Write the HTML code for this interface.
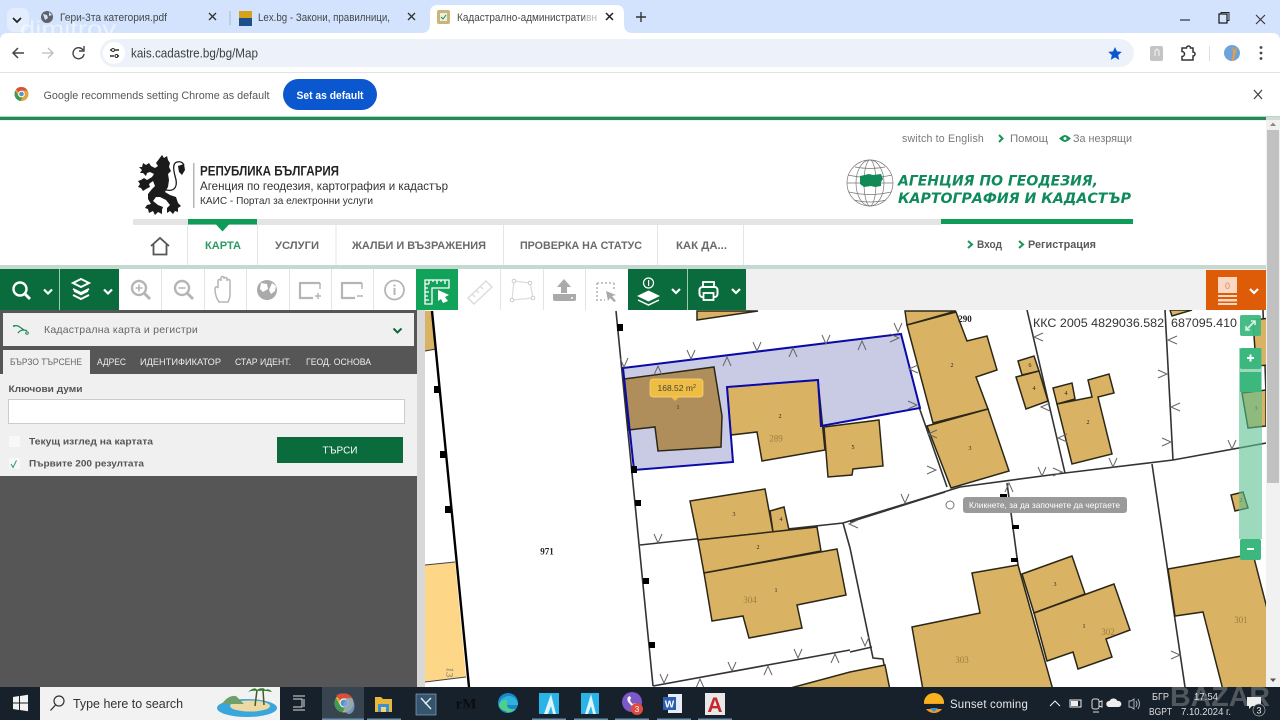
<!DOCTYPE html>
<html><head><meta charset="utf-8"><title>КАИС</title>
<style>
html,body{margin:0;padding:0;background:#fff;width:1280px;height:720px;overflow:hidden}
svg{display:block;font-family:"Liberation Sans","DejaVu Sans",sans-serif;filter:blur(.35px)}
text{white-space:pre}
.b polygon,.b path{fill:#dab263;stroke:#2b2818;stroke-width:1.5;stroke-linejoin:miter}
.l{fill:none;stroke:#333;stroke-width:1.6}
.m{fill:none;stroke:#666;stroke-width:1}
.i{fill:none;stroke:#b5b5b5;stroke-width:2.4}
.w{fill:none;stroke:#fff;stroke-width:2.4}
</style></head><body>
<svg width="1280" height="720" viewBox="0 0 1280 720" xmlns="http://www.w3.org/2000/svg">
<defs>
<path id="V" d="M-4-5L0 4 4-5" fill="none" stroke="#666"/>
<path id="A" d="M-4 5L0-4 4 5" fill="none" stroke="#666"/>
<path id="L" d="M5-4L-4 0 5 4" fill="none" stroke="#666"/>
<path id="R" d="M-5-4L4 0-5 4" fill="none" stroke="#666"/>
<path id="C" d="M-4-2L0 2 4-2" fill="none" stroke="#fff" stroke-width="2.2"/>
<clipPath id="mapclip"><rect x="425" y="310" width="841" height="377"/></clipPath>
</defs>

<!-- Chrome tab strip -->
<rect width="1280" height="33" fill="#d3e3fd"/>
<rect x="7" y="8" width="22" height="24" rx="7" fill="#e3edfd"/>
<path d="M13 18l4 4 4-4" fill="none" stroke="#222" stroke-width="1.7"/>
<circle cx="47" cy="17" r="6" fill="#5f6368"/><path d="M43 14l4 1 1 3-3 2zM49 12l3 3-3 1z" fill="#d3e3fd"/>
<text x="60" y="21" font-size="11" fill="#45474a" textLength="107" lengthAdjust="spacingAndGlyphs">Гери-3та категория.pdf</text>
<path d="M209 13l7 7M216 13l-7 7" stroke="#333" stroke-width="1.400"/>
<rect x="229.500" y="11" width="1" height="14" fill="#a9b6cc"/>
<rect x="239" y="11" width="13" height="15" fill="#1d4f8c"/><rect x="239" y="11" width="13" height="7" fill="#d6a21c"/>
<text x="258" y="21" font-size="11" fill="#45474a" textLength="132" lengthAdjust="spacingAndGlyphs">Lex.bg - Закони, правилници,</text>
<path d="M408 13l7 7M415 13l-7 7" stroke="#333" stroke-width="1.400"/>
<path d="M421 33q9 0 9-9v-11q0-8 8-8h178q8 0 8 8v11q0 9 9 9z" fill="#fff"/>
<rect x="437" y="10" width="13" height="14" rx="2" fill="#cfb27a"/><rect x="440" y="13" width="7" height="8" fill="#e8f2e2"/><path d="M441 17l2 2 3-4" stroke="#1a8a50" fill="none"/>
<text x="457" y="21" font-size="11" fill="#45474a" textLength="140" lengthAdjust="spacingAndGlyphs">Кадастрално-административн</text>
<rect x="585" y="8" width="14" height="18" fill="#fff" opacity=".6"/>
<path d="M606 13l7 7M613 13l-7 7" stroke="#222" stroke-width="1.500"/>
<path d="M636 17h10M641 12v10" stroke="#333" stroke-width="1.400"/>
<path d="M1180 20h10" stroke="#333" stroke-width="1.200"/>
<rect x="1219" y="14" width="8" height="9" fill="none" stroke="#222" stroke-width="1.300"/><path d="M1221 14v-1.500h8v8h-2" fill="none" stroke="#222"/>
<path d="M1256 15l9 9M1265 15l-9 9" stroke="#333" stroke-width="1.100"/>

<!-- Chrome toolbar -->
<rect y="33" width="1280" height="39" fill="#fff"/>
<path d="M0 33h8q-8 0-8 8zM1280 33h-8q8 0 8 8z" fill="#d3e3fd"/>
<rect y="72" width="1280" height="1" fill="#e2e2e2"/>
<text x="20" y="36" font-size="21" fill="#fff" opacity=".55" textLength="96" lengthAdjust="spacingAndGlyphs">dimitrov</text>
<path d="M24 53H13M18 48l-5 5 5 5" fill="none" stroke="#444" stroke-width="1.500"/>
<path d="M42 53h11M48 48l5 5-5 5" fill="none" stroke="#b8bcc2" stroke-width="1.300"/>
<path d="M83 50a5.500 5.500 0 1 0 1 4M84 46v5h-5" fill="none" stroke="#444" stroke-width="1.400"/>
<rect x="100" y="39" width="1034" height="28" rx="14" fill="#edf2fa"/>
<circle cx="114" cy="53" r="11" fill="#fff"/>
<path d="M110 50h2M115 50h4M110 56h4M117 56h2" stroke="#333" stroke-width="1.400"/><circle cx="113" cy="50" r="1.500" fill="none" stroke="#333"/><circle cx="116.500" cy="56" r="1.500" fill="none" stroke="#333"/>
<text x="131" y="57.500" font-size="12.500" fill="#3c4043" textLength="127" lengthAdjust="spacingAndGlyphs">kais.cadastre.bg/bg/Map</text>
<path d="M1115 47l2 4.400 4.800.5-3.600 3.200 1 4.800-4.200-2.500-4.200 2.500 1-4.800-3.600-3.200 4.800-.5z" fill="#0b57d0"/>
<rect x="1150" y="46" width="13" height="15" rx="2" fill="#c4c4c4"/><path d="M1155 56v-5l2-2 2 2v5" fill="none" stroke="#eee" stroke-width="1.200"/>
<path d="M1182 48h4.500a2 2 0 0 1 4 0h2.500v4a2 2 0 0 1 0 4v4h-11v-3.500a2 2 0 0 0 0-5z" fill="none" stroke="#333" stroke-width="1.500"/>
<rect x="1209" y="46" width="1" height="15" fill="#dbe0e8"/>
<circle cx="1232" cy="53" r="8" fill="#6fa2d8"/><path d="M1232 46l2 4 3-3-2 8-1 6-2 0 1-8z" fill="#e6a040"/>
<circle cx="1261" cy="47.500" r="1.400" fill="#444"/><circle cx="1261" cy="53" r="1.400" fill="#444"/><circle cx="1261" cy="58.500" r="1.400" fill="#444"/>

<!-- Infobar -->
<rect y="73" width="1280" height="44" fill="#fff"/>
<circle cx="21.500" cy="94" r="7" fill="#e0a63c"/><path d="M21.500 87a7 7 0 0 1 6 3.500h-6a3.500 3.500 0 0 0-3 1.700l-2.500-3a7 7 0 0 1 5.500-2.200z" fill="#d8503f"/><path d="M15.500 90.500a7 7 0 0 0 5 10.500l2-4a3.500 3.500 0 0 1-4.500-1.500z" fill="#3c9a55"/><circle cx="21.500" cy="94" r="2.800" fill="#5a8ed0" stroke="#fff"/>
<text x="43.500" y="99" font-size="11" fill="#55585c" textLength="226" lengthAdjust="spacingAndGlyphs">Google recommends setting Chrome as default</text>
<rect x="283" y="79" width="94" height="31" rx="15.500" fill="#0b57d0"/>
<text x="296.500" y="99" font-size="11" font-weight="bold" fill="#fff" textLength="67" lengthAdjust="spacingAndGlyphs">Set as default</text>
<path d="M1254 90l8 9M1262 90l-8 9" stroke="#444" stroke-width="1.300"/>
<rect y="116" width="1280" height="1" fill="#a6e0c0"/>
<rect y="117" width="1266" height="3" fill="#2a8558"/>
<rect x="1266" y="117" width="14" height="3" fill="#d8d8d8"/>
<rect y="120" width="1266" height="1" fill="#e4f8f0"/>

<!-- Header -->
<rect y="121" width="1266" height="145" fill="#fff"/>
<text x="902" y="142" font-size="11" fill="#77797b" letter-spacing=".2" textLength="82" lengthAdjust="spacingAndGlyphs">switch to English</text>
<path d="M999 135l3.500 3.500-3.500 3.500" fill="none" stroke="#18935a" stroke-width="2"/>
<text x="1010" y="142" font-size="11" fill="#77797b" textLength="38" lengthAdjust="spacingAndGlyphs">Помощ</text>
<path d="M1059 138.500q4-3.500 6-3.500t6 3.500q-4 3.500-6 3.500t-6-3.500z" fill="#18935a"/><circle cx="1065" cy="138.500" r="1.500" fill="#fff"/>
<text x="1073" y="142" font-size="11" fill="#77797b" textLength="59" lengthAdjust="spacingAndGlyphs">За незрящи</text>

<!-- Lion -->
<g fill="#1b1b1b">
<path d="M159 159L162 155 164 158 167 156 168 160 170 163 169 167 171 171 168 174 169 180 168 187 165 192 170 195 176 197 178 203 181 206 178 208 178 212 175 211 173 214 170 211 167 213 167 208 170 205 166 200 160 197 156 197 153 201 158 205 163 207 162 210 162 214 158 212 155 215 153 211 149 213 148 209 145 208 147 205 151 204 148 199 148 194 152 189 155 186 153 181 149 184 150 187 146 189 143 191 141 188 138 187 140 184 138 181 141 180 144 178 147 180 152 177 154 174 150 172 147 173 146 176 143 173 140 173 142 170 139 167 142 167 143 163 146 165 149 163 151 166 155 168 158 166 156 163Z"/>
<path d="M166 190C176 192 178 185 175 176C173 168 173 163 177 162C181 161 183 163 184 165" fill="none" stroke="#1b1b1b" stroke-width="1.300"/>
<path d="M178 166L184 164 185 170 182 175 179 172Z"/>
</g>
<rect x="193" y="163" width="1.500" height="45" fill="#b5b5b5"/>
<text x="200" y="175.500" font-size="13.500" font-weight="bold" fill="#222" textLength="139" lengthAdjust="spacingAndGlyphs">РЕПУБЛИКА БЪЛГАРИЯ</text>
<text x="200" y="190" font-size="12" fill="#333" textLength="248" lengthAdjust="spacingAndGlyphs">Агенция по геодезия, картография и кадастър</text>
<text x="200" y="204" font-size="10.500" fill="#333" textLength="173" lengthAdjust="spacingAndGlyphs">КАИС - Портал за електронни услуги</text>

<!-- Agency logo -->
<g fill="none" stroke="#777" stroke-width=".7">
<circle cx="870" cy="183" r="23"/><ellipse cx="870" cy="183" rx="14" ry="23"/><ellipse cx="870" cy="183" rx="6" ry="23"/>
<path d="M848 175q22 5 44 0M847 183h46M849 192q21 5 42 0M854 200q16 4 32 0M855 167q15 3 30 0"/>
</g>
<path d="M860 176l9-2 4 1 8-1 2 5-2 3 0 4-6 1-4-1-7 1-4-3z" fill="#128a58"/>
<text x="898" y="185.500" font-size="14" font-weight="bold" font-style="italic" font-family="DejaVu Sans,sans-serif" fill="#0f8a5c" textLength="200" lengthAdjust="spacingAndGlyphs">АГЕНЦИЯ ПО ГЕОДЕЗИЯ,</text>
<text x="898" y="203" font-size="14" font-weight="bold" font-style="italic" font-family="DejaVu Sans,sans-serif" fill="#0f8a5c" textLength="233" lengthAdjust="spacingAndGlyphs">КАРТОГРАФИЯ И КАДАСТЪР</text>

<!-- Nav -->
<rect x="133" y="219" width="808" height="6" fill="#e4e4e4"/>
<rect x="941" y="219" width="192" height="5" fill="#0f9b58"/>
<rect x="188" y="219" width="69" height="5.500" fill="#0f9b58"/>
<path d="M216 224.500h13l-6.500 7z" fill="#0f9b58"/>
<g fill="#e3e6e4"><rect x="187" y="225" width="1" height="40"/><rect x="257" y="225" width="1" height="40"/><rect x="335.500" y="225" width="1" height="40"/><rect x="503" y="225" width="1" height="40"/><rect x="657" y="225" width="1" height="40"/><rect x="743" y="225" width="1" height="40"/></g>
<path d="M151 246l9-8 9 8M153.500 244.500V254.500h13V244.500" fill="none" stroke="#555" stroke-width="1.800"/>
<g font-size="11" font-weight="bold" fill="#6a6a6a">
<text x="205" y="249" fill="#2a9a63" textLength="36" lengthAdjust="spacingAndGlyphs">КАРТА</text>
<text x="275" y="249" textLength="44" lengthAdjust="spacingAndGlyphs">УСЛУГИ</text>
<text x="352" y="249" textLength="134" lengthAdjust="spacingAndGlyphs">ЖАЛБИ И ВЪЗРАЖЕНИЯ</text>
<text x="520" y="249" textLength="122" lengthAdjust="spacingAndGlyphs">ПРОВЕРКА НА СТАТУС</text>
<text x="676" y="249" textLength="51" lengthAdjust="spacingAndGlyphs">КАК ДА...</text>
<text x="977" y="248" fill="#5a5a5a" textLength="25" lengthAdjust="spacingAndGlyphs">Вход</text>
<text x="1028" y="248" fill="#5a5a5a" textLength="68" lengthAdjust="spacingAndGlyphs">Регистрация</text>
</g>
<path d="M968 241l4 3.500-4 3.500M1019 241l4 3.500-4 3.500" fill="none" stroke="#18935a" stroke-width="2"/>
<rect y="265" width="1266" height="4" fill="#c6d9d0"/>

<!-- Map -->
<g clip-path="url(#mapclip)">
<rect x="425" y="310" width="841" height="377" fill="#fff"/>
<polygon points="425,311 433,311 436,349 425,351" fill="#dab263"/>
<path d="M425 351L436 349" stroke="#333"/>
<polygon points="425,565 455,562 466,677 425,682" fill="#fdd688"/>
<path d="M425 565L455 562M425 682L466 677" stroke="#444" fill="none"/>
<text x="0" y="0" font-size="10" fill="#777" font-family="Liberation Serif" transform="translate(447,667) rotate(95)">13</text>
<!-- parcel -->
<polygon points="623,368 901,334 920,408 821,426 818,380 727,387 733,462 634,470" fill="#c9cbe5"/>
<!-- boundaries -->
<path d="M432 311L469 687" fill="none" stroke="#000" stroke-width="2.400"/>
<path class="l" d="M616 311L653 686M640 545L843 523 960 487 1065 473 1173 460 1266 443M653 686L850 650M850 522L945 492M843 523L850 548 873 658 883 659 888 687M850 652L872 647M1027 310L1065 473M1165 310L1173 460M1152 464L1185 687M1007 483L1018 565M1263 310L1266 393M919 407L947 487"/>
<g class="b">
<polygon points="905,311 956,311 907,325" />
<polygon points="697,311 758,311 697,320" />
<polygon points="1170,310 1192,310 1172,316"/>
<polygon points="907,325 956,312 967,341 987,336 997,370 976,377 988,409 933,423"/>
<polygon points="927,426 988,409 1009,471 951,488"/>
<polygon points="1018,361 1034,356 1039,371 1022,375"/>
<polygon points="1016,377 1039,371 1048,401 1026,409"/>
<polygon points="1053,388 1072,383 1075,399 1057,404"/>
<polygon points="1057,404 1092,397 1088,380 1109,374 1114,393 1098,397 1112,454 1072,464"/>
<polygon points="1253,320 1270,318 1270,365 1256,366"/>
<polygon points="1242,393 1266,390 1266,426 1248,428"/>
<polygon points="1231,495 1243,492 1248,508 1235,511"/>
<polygon points="727,387 818,380 825,450 762,461 757,432 731,435"/>
<polygon points="824,427 879,420 883,466 853,469 852,475 828,477"/>
<polygon points="690,501 765,489 773,532 698,540"/>
<polygon points="770,511 784,507 789,530 773,532"/>
<polygon points="698,540 817,527 821,551 704,573"/>
<polygon points="704,573 837,549 846,595 797,605 802,628 749,638 743,616 712,621"/>
<polygon points="783,690 850,672 885,665 890,690"/>
<polygon points="972,573 1018,565 1053,690 923,690 912,627 980,613"/>
<polygon points="1022,574 1072,556 1085,594 1034,613"/>
<polygon points="1034,613 1114,584 1130,630 1106,639 1112,657 1078,669 1073,652 1047,661"/>
<polygon points="1168,569 1253,554 1270,620 1270,690 1223,690 1203,612 1175,616"/>
</g>
<polygon points="624,379 714,367 722,416 721,447 658,451 655,427 628,430" fill="#b08e5c" stroke="#2b2818" stroke-width="1.500"/>
<path d="M623 368L901 334 920 408 821 426 818 380 727 387 733 462 634 470Z" fill="none" stroke="#0a0aa8" stroke-width="2"/>
<!-- markers -->
<g fill="#000">
<rect x="617" y="324" width="6" height="7"/><rect x="434" y="386" width="6" height="7"/><rect x="440" y="451" width="6" height="7"/><rect x="445" y="506" width="6" height="7"/><rect x="631" y="466" width="6" height="7"/><rect x="635" y="500" width="6" height="6"/><rect x="643" y="578" width="6" height="6"/><rect x="649" y="642" width="6" height="6"/><rect x="1000" y="494" width="7" height="4"/><rect x="1012" y="525" width="7" height="4"/><rect x="1011" y="558" width="7" height="4"/>
</g>
<!-- boundary ticks -->
<use href="#V" x="624" y="363"/><use href="#V" x="691" y="355"/><use href="#V" x="757" y="347"/><use href="#V" x="826" y="340"/><use href="#V" x="898" y="328"/>
<use href="#A" x="658" y="370"/><use href="#A" x="727" y="361"/><use href="#A" x="793" y="352"/><use href="#A" x="862" y="345"/>
<use href="#R" x="895" y="338"/><use href="#L" x="913" y="369"/><use href="#R" x="913" y="405"/><use href="#L" x="932" y="434"/><use href="#R" x="932" y="470"/>
<use href="#L" x="1038" y="337"/><use href="#L" x="1172" y="340"/><use href="#R" x="1163" y="374"/><use href="#L" x="1175" y="407"/><use href="#R" x="1167" y="442"/><use href="#L" x="1045" y="407"/><use href="#L" x="1062" y="438"/><use href="#R" x="1058" y="472"/>
<use href="#V" x="1042" y="472"/><use href="#V" x="1113" y="463"/><use href="#V" x="1232" y="445"/><use href="#A" x="1009" y="487"/>
<use href="#V" x="658" y="539"/><use href="#V" x="732" y="667"/><use href="#A" x="768" y="670"/><use href="#V" x="798" y="654"/><use href="#A" x="835" y="658"/><use href="#V" x="664" y="679"/><use href="#A" x="700" y="683"/>
<use href="#V" x="905" y="499"/><use href="#V" x="865" y="642"/><use href="#R" x="1176" y="655"/><use href="#L" x="853" y="524"/>
<!-- numbers -->
<g font-family="Liberation Serif,serif" fill="#222" font-size="6" text-anchor="middle">
<text x="678" y="409">1</text><text x="780" y="418">2</text><text x="853" y="449">5</text><text x="952" y="367">2</text><text x="970" y="450">3</text><text x="1030" y="367">6</text><text x="1034" y="390">4</text><text x="1066" y="395">4</text><text x="1088" y="424">2</text><text x="1256" y="410">3</text><text x="1241" y="502">2</text><text x="734" y="516">3</text><text x="781" y="521">4</text><text x="758" y="549">2</text><text x="776" y="592">1</text><text x="1055" y="586">3</text><text x="1084" y="628">1</text>
</g>
<g font-family="Liberation Serif,serif" font-size="9" text-anchor="middle">
<text x="547" y="554.500" font-weight="bold" fill="#222">971</text>
<text x="965" y="322" font-weight="bold" fill="#222">290</text>
<text x="776" y="441.500" fill="#9c7d3e">289</text>
<text x="750" y="603" fill="#9c7d3e">304</text>
<text x="962" y="663" fill="#9c7d3e">303</text>
<text x="1108" y="635" fill="#9c7d3e">302</text>
<text x="1241" y="623" fill="#9c7d3e">301</text>
</g>
<!-- controls -->
<rect x="1239" y="348" width="23" height="191" fill="#5cc08f" opacity=".6"/>
<rect x="1240" y="315" width="21" height="21" rx="2" fill="#3cb87f" opacity=".95"/>
<rect x="1240" y="348" width="21" height="21" rx="2" fill="#3cb87f"/>
<rect x="1240" y="372" width="21" height="20" fill="#3cb87f"/>
<rect x="1240" y="539" width="21" height="21" rx="2" fill="#3cb87f"/>
<path d="M1246 330l9-9M1251 321h4v4M1250 330h-4v-4" fill="none" stroke="#d8f3e6" stroke-width="1.600"/>
<path d="M1247 358h7M1250.500 354.500v7M1247 549h7" fill="none" stroke="#fff" stroke-width="2"/>
<!-- tooltip -->
<circle cx="950" cy="505" r="4" fill="#fff" stroke="#777" stroke-width="1"/>
<rect x="963" y="497" width="164" height="16" rx="3" fill="#9a9a9a"/>
<text x="969" y="508" font-size="8.500" fill="#fff" textLength="151" lengthAdjust="spacingAndGlyphs">Кликнете, за да започнете да чертаете</text>
<text x="1033" y="327" font-size="12" fill="#333" textLength="204" lengthAdjust="spacingAndGlyphs">ККС 2005 4829036.582, 687095.410</text>
<!-- measure -->
<rect x="650" y="379" width="53" height="18" rx="3" fill="#efbd42" stroke="#f6d88c" stroke-width=".7"/>
<path d="M671 397h8l-4 4z" fill="#efbd42"/>
<text x="657.500" y="391" font-size="8.500" fill="#444">168.52 m<tspan font-size="5.500" dy="-3">2</tspan></text>
</g>

<!-- Tool bar -->
<rect y="269" width="1266" height="41" fill="#f0f0f0"/>
<rect x="119" y="269" width="297" height="41" fill="#fff"/>
<rect x="458" y="269" width="170" height="41" fill="#fff"/>
<rect y="269" width="119" height="41" fill="#0a6b3c"/>
<rect x="59" y="269" width="1" height="41" fill="#9fc9b2"/>
<g fill="#e4e4e4"><rect x="161" y="269" width="1" height="41"/><rect x="204" y="269" width="1" height="41"/><rect x="246" y="269" width="1" height="41"/><rect x="289" y="269" width="1" height="41"/><rect x="331" y="269" width="1" height="41"/><rect x="373" y="269" width="1" height="41"/><rect x="500" y="269" width="1" height="41"/><rect x="543" y="269" width="1" height="41"/><rect x="585" y="269" width="1" height="41"/></g>
<!-- search -->
<circle cx="20" cy="289" r="6.500" class="w"/><path d="M25 294l5 5" stroke="#fff" stroke-width="3"/>
<use href="#C" x="48" y="291.500"/>
<path d="M81 279l8 4-8 4-8-4zM73 289l8 4 8-4M73 295l8 4 8-4" fill="none" stroke="#fff" stroke-width="2"/><path d="M74 291l7 3.500 7-3.500" fill="none" stroke="#fff" stroke-width="1.500"/>
<use href="#C" x="108" y="291.500"/>
<circle cx="139" cy="288" r="7" class="i"/><path d="M144 293l6 6" stroke="#b5b5b5" stroke-width="3"/><path d="M135.500 288h7M139 284.500v7" stroke="#b5b5b5" stroke-width="1.600"/>
<circle cx="182" cy="288" r="7" class="i"/><path d="M187 293l6 6" stroke="#b5b5b5" stroke-width="3"/><path d="M178.500 288h7" stroke="#b5b5b5" stroke-width="1.600"/>
<path d="M219 302c-2-3-4-8-4-13 0-2 2-3 3-1v-7c0-2 3-2 3 0v-3c0-2 3-2 3 0v1c0-2 3-2 3 0v2c0-2 3-2 3 0v14c0 3-1 5-2 7z" fill="#fff" stroke="#b5b5b5" stroke-width="1.500"/>
<circle cx="267" cy="290" r="10" fill="#aaa"/><path d="M261 283l6 1 1 5-5 3-3-3zM272 283l4 3-1 5-4 3-2-4z" fill="#fff"/>
<path d="M320 283h-20v15h13" fill="none" stroke="#b5b5b5" stroke-width="2.200"/><path d="M315 296h6M318 293v6M320 283v6" stroke="#b5b5b5" stroke-width="1.500"/>
<path d="M362 283h-20v15h13" fill="none" stroke="#b5b5b5" stroke-width="2.200"/><path d="M357 296h6M362 283v6" stroke="#b5b5b5" stroke-width="1.500"/>
<circle cx="394.500" cy="290" r="9.500" fill="none" stroke="#b5b5b5" stroke-width="1.800"/><rect x="393.500" y="288" width="2" height="7" fill="#b5b5b5"/><rect x="393.500" y="284.500" width="2" height="2" fill="#b5b5b5"/>
<rect x="416" y="269" width="42" height="41" fill="#12a35a"/>
<path d="M425 280h24v8h-17v16h-7zM429 280v4M433 280v2M437 280v4M441 280v2M445 280v4M425 284h4M425 288h3M425 292h4M425 296h3M425 300h4" fill="none" stroke="#fff" stroke-width="1.300"/><path d="M438 290l11 5-4 2 3 4-5 2-2-4-3 2z" fill="#fff"/>
<path d="M468 298l18-17 6 6-18 17zM472 294l3 3M476 290l3 3M480 286l3 3" fill="none" stroke="#ddd" stroke-width="1.500"/>
<path d="M514 281l16 2 3 15-21 2z" fill="none" stroke="#ddd" stroke-width="1.300"/><g fill="#fff" stroke="#ccc"><circle cx="514" cy="281" r="1.800"/><circle cx="530" cy="283" r="1.800"/><circle cx="533" cy="298" r="1.800"/><circle cx="512" cy="300" r="1.800"/></g>
<path d="M564 279l7 8h-4v6h-6v-6h-4z" fill="#aaa"/><path d="M553 294h23v5q0 2-2 2h-19q-2 0-2-2z" fill="#aaa"/><circle cx="572" cy="298" r="1" fill="#fff"/>
<path d="M597 283h17M597 283v17h8M614 283v6" fill="none" stroke="#c4c4c4" stroke-width="2" stroke-dasharray="2 2"/><path d="M606 291l10 4-4 1 4 5-2 1-4-4-2 3z" fill="#aaa"/>
<rect x="628" y="269" width="118" height="41" fill="#0a6b3c"/>
<rect x="687" y="269" width="1" height="41" fill="#9fc9b2"/>
<circle cx="648.500" cy="283" r="5" fill="none" stroke="#fff" stroke-width="1.200"/><rect x="648" y="280" width="1.200" height="6" fill="#fff"/>
<path d="M637 296l11.500-5.500 11.500 5.500-11.500 5.500z" fill="#fff"/><path d="M638 300l10.500 5 10.500-5" fill="none" stroke="#fff" stroke-width="1.500"/>
<use href="#C" x="676" y="291"/>
<rect x="703" y="282" width="11" height="5" fill="none" stroke="#fff" stroke-width="1.800"/><rect x="699.500" y="287" width="18" height="10" rx="3" fill="none" stroke="#fff" stroke-width="2"/><rect x="703.500" y="293" width="10" height="7" fill="#0a6b3c" stroke="#fff" stroke-width="1.800"/>
<use href="#C" x="736" y="291"/>
<rect x="1206" y="270" width="60" height="40" fill="#de5b08"/>
<rect x="1218" y="277" width="19" height="16" fill="#fad8c2"/>
<rect x="1218" y="295" width="19" height="2" fill="#fad8c2"/><rect x="1218" y="299" width="19" height="2.500" fill="#fad8c2"/><rect x="1218" y="303" width="19" height="2" fill="#fad8c2"/>
<text x="1227.500" y="289" font-size="9" fill="#cf8a60" text-anchor="middle">0</text>
<use href="#C" x="1254" y="291"/>

<!-- Left panel -->
<rect y="310" width="417" height="377" fill="#565656"/>
<rect x="417" y="310" width="8" height="377" fill="#d8d8d8"/>
<rect x="3" y="313" width="411" height="33" fill="#f0f0f0"/>
<path d="M14 326q3-1 5 .5l5 3.500 3 .5M18 333q2-3 6-3" fill="none" stroke="#1b8a58" stroke-width="1.300"/><circle cx="14" cy="326" r="1" fill="#1b8a58"/><circle cx="27" cy="333" r="1.300" fill="none" stroke="#1b8a58"/>
<text x="44" y="333" font-size="10.500" fill="#666" letter-spacing=".2" textLength="154" lengthAdjust="spacingAndGlyphs">Кадастрална карта и регистри</text>
<path d="M393.500 328.500l4 4 4-4" fill="none" stroke="#0a6b3c" stroke-width="2"/>
<rect x="3" y="350" width="87" height="24" fill="#f0f0f0"/>
<rect y="374" width="417" height="102" fill="#f0f0f0"/>
<g font-size="9.500" fill="#eee">
<text x="10" y="365" fill="#666" textLength="72" lengthAdjust="spacingAndGlyphs">БЪРЗО ТЪРСЕНЕ</text>
<text x="97" y="365" textLength="29" lengthAdjust="spacingAndGlyphs">АДРЕС</text>
<text x="140" y="365" textLength="81" lengthAdjust="spacingAndGlyphs">ИДЕНТИФИКАТОР</text>
<text x="235" y="365" textLength="56" lengthAdjust="spacingAndGlyphs">СТАР ИДЕНТ.</text>
<text x="306" y="365" textLength="65" lengthAdjust="spacingAndGlyphs">ГЕОД. ОСНОВА</text>
</g>
<text x="8.500" y="392" font-size="9.500" font-weight="bold" fill="#555" textLength="74" lengthAdjust="spacingAndGlyphs">Ключови думи</text>
<rect x="8.500" y="399.500" width="396" height="24" fill="#fff" stroke="#ccc"/>
<rect x="9" y="436" width="11" height="11" fill="#f8f8f8"/>
<rect x="9" y="458" width="11" height="11" fill="#f8f8f8"/>
<path d="M11 464l2 3.500 3.500-7" fill="none" stroke="#2a9a63" stroke-width="1"/>
<text x="29" y="444.500" font-size="9.500" font-weight="bold" fill="#555" textLength="124" lengthAdjust="spacingAndGlyphs">Текущ изглед на картата</text>
<text x="29" y="466.500" font-size="9.500" font-weight="bold" fill="#555" textLength="115" lengthAdjust="spacingAndGlyphs">Първите 200 резултата</text>
<rect x="277" y="437" width="126" height="26" fill="#0a6b3c"/>
<text x="340" y="453.500" font-size="10" fill="#fff" text-anchor="middle" textLength="35" lengthAdjust="spacingAndGlyphs">ТЪРСИ</text>

<!-- Page scrollbar -->
<rect x="1266" y="120" width="14" height="567" fill="#f1f1f1"/>
<rect x="1267" y="130" width="12" height="353" fill="#c1c1c1"/>
<path d="M1270 126l3-3.500 3 3.500z" fill="#888"/><path d="M1270 678.500l3 3.500 3-3.500z" fill="#555"/>

<!-- Taskbar -->
<rect y="687" width="1280" height="33" fill="#16212b"/>
<path d="M13 697l6-1v6.500h-6zM20 696l8-1.200v7.700h-8zM13 703.500h6v6.500l-6-1zM20 703.500h8v7.700l-8-1.200z" fill="#f2f2f2"/>
<rect x="40" y="687" width="240" height="33" fill="#f2f2f2"/>
<circle cx="59" cy="701" r="5" fill="none" stroke="#333" stroke-width="1.200"/><path d="M55.500 705l-5 5.500" stroke="#333" stroke-width="1.300"/>
<text x="73" y="708" font-size="12.500" fill="#333" textLength="110" lengthAdjust="spacingAndGlyphs">Type here to search</text>
<ellipse cx="247" cy="708" rx="30" ry="9" fill="#3aa7dc"/><ellipse cx="250" cy="706" rx="20" ry="5.500" fill="#eed9a4"/><path d="M222 704q6-9 14-8l8 8z" fill="#6f9f6c"/><path d="M255 706l2-16M264 705l-1-15" stroke="#4c5a22" stroke-width="1.500"/><path d="M248 692q7-6 9-2 5-4 8 1-6-1-8 0-5-1-9 1zM258 691q6-5 7-1 4-2 7 2-8-2-14-1z" fill="#2d7a2e"/>
<path d="M293 696h12M293 710h12M293 699h9v8h-9M304 699v8" fill="none" stroke="#ddd"/>
<rect x="322" y="687" width="42" height="33" fill="#38444f"/>
<circle cx="344" cy="703" r="9.500" fill="#e4b53a"/><path d="M344 693.500a9.500 9.500 0 0 1 8.300 4.800h-8.300a4.800 4.800 0 0 0-4 2l-3.800-4.500a9.500 9.500 0 0 1 7.800-2.300z" fill="#d94f3e"/><path d="M336 698a9.500 9.500 0 0 0 6.500 14.400l3-5.500a4.800 4.800 0 0 1-6-2.500z" fill="#3c9a55"/><circle cx="344" cy="703" r="4" fill="#5a8ed0" stroke="#fff"/><ellipse cx="349" cy="706" rx="5.500" ry="8" fill="#7fa5cf" opacity=".8"/>
<path d="M375 697h6l2 2h9v13h-17z" fill="#e8b83a"/><rect x="378" y="704" width="11" height="8" fill="#3b8fd4"/><rect x="381" y="707" width="5" height="5" fill="#f3d56a"/>
<rect x="416" y="694" width="20" height="21" fill="#33566e" stroke="#aac" stroke-width=".6"/><path d="M421 698l10 11M431 698l-6 6" stroke="#e8eef2" stroke-width="1.400" fill="none"/>
<text x="466" y="708.500" font-size="15" font-weight="bold" font-family="Liberation Serif,serif" fill="#0d0d0d" text-anchor="middle">rM</text>
<circle cx="508" cy="703" r="10" fill="#1a88c9"/><path d="M499 705c1-6 6-9 11-8 5 1 8 4 8 8h-11c0 3 3 5 9 4-3 3-7 4-10 3 3-1-7-1-7-7z" fill="#4fd08a"/><path d="M507 705h11c0-5-4-9-9-9-5 0-9 4-10 8 2-3 5-5 8-4z" fill="#2fb3dd"/>
<rect x="539" y="693" width="20" height="21" fill="#2ab3e6"/><path d="M544 714l7-20 5 20h-3l-2-8-3 8z" fill="#dff5fd"/>
<rect x="581" y="693" width="18" height="21" fill="#2ab3e6"/><path d="M585 714l6-20 5 20h-3l-2-8-3 8z" fill="#dff5fd"/>
<circle cx="632" cy="702" r="10" fill="#7c58c8"/><path d="M628 697q2-2 3 1l-1 2q1 3 3 4l2-1q3 1 1 3-3 2-6-2-4-4-2-7z" fill="#fff"/>
<circle cx="637" cy="709" r="6" fill="#e04a3f"/><text x="637" y="712" font-size="8" fill="#fff" text-anchor="middle">3</text>
<rect x="668" y="694" width="14" height="19" fill="#e8eef8"/><rect x="663" y="697" width="13" height="13" fill="#2b5fb3"/><text x="669.500" y="707.500" font-size="10" font-weight="bold" fill="#fff" text-anchor="middle">W</text>
<rect x="705" y="693" width="20" height="22" fill="#e8e8e8"/><text x="715" y="712" font-size="21" font-weight="bold" fill="#c9272c" text-anchor="middle">A</text>
<g fill="#6c93b0"><rect x="322" y="718.500" width="42" height="1.500"/><rect x="367" y="718.500" width="34" height="1.500"/><rect x="574" y="718.500" width="34" height="1.500"/><rect x="615" y="718.500" width="34" height="1.500"/><rect x="657" y="718.500" width="34" height="1.500"/><rect x="698" y="718.500" width="34" height="1.500"/><rect x="532" y="718.500" width="34" height="1.500"/></g>

<circle cx="934" cy="703" r="10" fill="#f29a1f"/><path d="M924 703a10 10 0 0 1 20 0z" fill="#f7b21d"/><rect x="922" y="704" width="24" height="5" fill="#16212b"/><path d="M930 708h8l-4 4z" fill="#2f8de4"/>
<text x="950" y="708" font-size="12" fill="#e8e8e8" letter-spacing=".2" textLength="78" lengthAdjust="spacingAndGlyphs">Sunset coming</text>
<path d="M1050 706l5-5 5 5" fill="none" stroke="#eee" stroke-width="1.100"/>
<rect x="1070" y="700" width="11" height="7" fill="none" stroke="#eee"/><rect x="1071" y="701" width="7" height="5" fill="#eee"/>
<rect x="1092" y="699" width="7" height="10" rx="2" fill="none" stroke="#ddd"/><path d="M1099 702l3-1v6l-3-1" fill="none" stroke="#ddd"/><path d="M1093 712h6" stroke="#ddd"/>
<path d="M1110 707a3 3 0 0 1 .5-6 4.500 4.500 0 0 1 8 0 3 3 0 0 1 1.500 6z" fill="#eee" transform="translate(-1 0)"/>
<path d="M1129 701h2l3-2v10l-3-2h-2zM1136 701q2 3 0 6M1138 699q3 5 0 10" fill="none" stroke="#bbb" stroke-width=".9"/>
<text x="1170" y="706" font-size="28" font-weight="bold" fill="#a8a8a8" opacity=".4" textLength="100" lengthAdjust="spacingAndGlyphs">BAZAR</text>
<g fill="#dedede" font-size="10.500">
<text x="1152" y="700" textLength="17" lengthAdjust="spacingAndGlyphs">БГР</text>
<text x="1149" y="715" textLength="23" lengthAdjust="spacingAndGlyphs">BGPT</text>
<text x="1194" y="700" textLength="24" lengthAdjust="spacingAndGlyphs">17:54</text>
<text x="1181" y="715" textLength="50" lengthAdjust="spacingAndGlyphs">7.10.2024 г.</text>
</g>
<path d="M1247 697h14v9h-9l-3 3v-3h-2z" fill="#eee"/>
<circle cx="1259" cy="710" r="6" fill="#16212b" stroke="#aaa" stroke-width=".7"/><text x="1259" y="713.500" font-size="9" fill="#eee" text-anchor="middle">3</text>
</svg>
</body></html>
